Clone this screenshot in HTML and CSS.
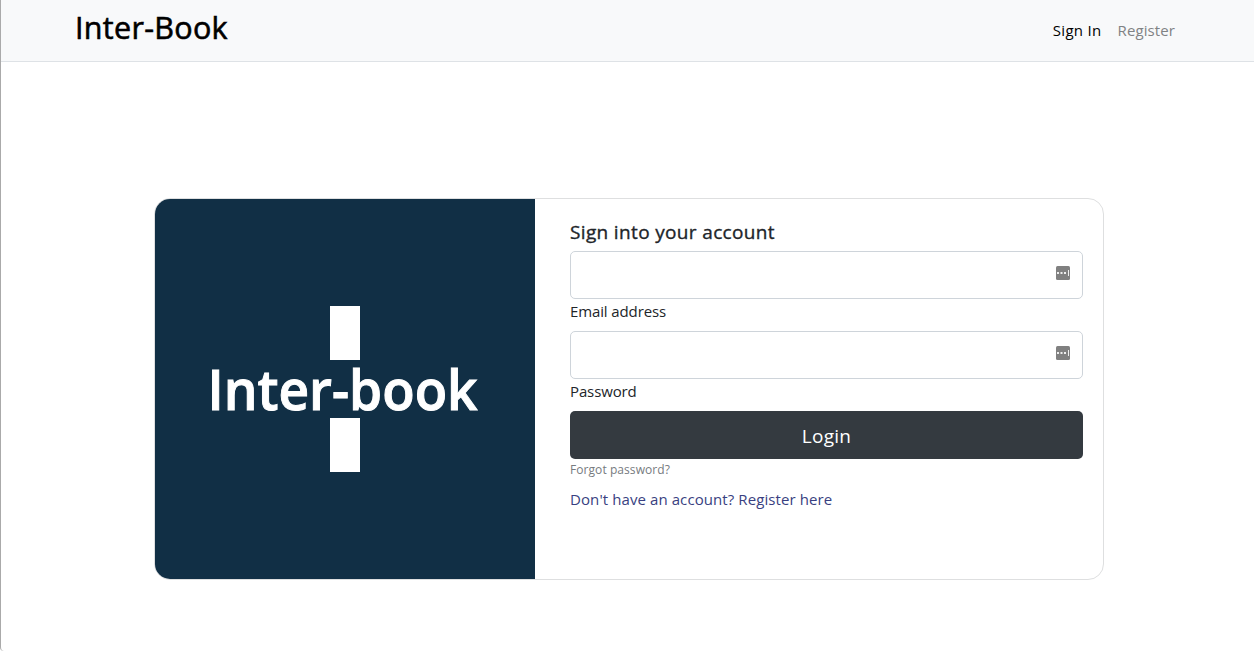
FILE: index.html
```html
<!DOCTYPE html>
<html lang="en">
<head>
<meta charset="utf-8">
<title>Inter-Book</title>
<link rel="stylesheet" href="styles.css">
</head>
<body>
<header class="navbar">
  <a class="brand" href="#"><span>Inter-Book</span></a>
  <nav class="nav-links">
    <a class="nav-link active" href="#">Sign In</a>
    <a class="nav-link" href="#">Register</a>
  </nav>
</header>
<main class="page">
  <section class="card">
    <svg class="logo" viewBox="0 0 380 380" role="img" aria-label="Inter-book">
      <rect width="380" height="380" fill="#112f45"/>
      <rect x="175" y="107" width="30" height="54" fill="#fff"/>
      <rect x="175" y="219" width="30" height="54" fill="#fff"/>
      <text class="logo-text" x="52.500" y="211" textLength="270" lengthAdjust="spacingAndGlyphs">Inter-book</text>
    </svg>
    <form class="form">
      <h1 class="title"><span>Sign into your account</span></h1>
      <div class="field">
        <div class="control"><input class="input" id="email" type="email">
          <svg class="fill-icon" viewBox="0 0 14 14"><rect width="14" height="14" rx="1.500" fill="#808080"/><path d="M1 6h2v2H1zM4.500 6h2v2h-2zM8 6h2v2H8zM12 4h1v6h-1z" fill="#eee"/></svg>
        </div>
        <label class="label" for="email"><span>Email address</span></label>
      </div>
      <div class="field">
        <div class="control"><input class="input" id="password" type="password">
          <svg class="fill-icon" viewBox="0 0 14 14"><rect width="14" height="14" rx="1.500" fill="#808080"/><path d="M1 6h2v2H1zM4.500 6h2v2h-2zM8 6h2v2H8zM12 4h1v6h-1z" fill="#eee"/></svg>
        </div>
        <label class="label" for="password"><span>Password</span></label>
      </div>
      <button class="login" type="button">Login</button>
      <a class="forgot" href="#"><span>Forgot password?</span></a>
      <p class="signup"><span>Don't have an account? <a href="#">Register here</a></span></p>
    </form>
  </section>
</main>
</body>
</html>
```
FILE: styles.css
```css
* { box-sizing: border-box; }
body {
  margin: 0;
  height: 651px;
  overflow: hidden;
  border-left: 1px solid #aaa;
  border-bottom-left-radius: 4px;
  background: #fff;
  color: #212529;
  font: 15px/24px "Open Sans", "Noto Sans", sans-serif;
}
a { color: inherit; text-decoration: none; }
.navbar {
  display: flex;
  justify-content: space-between;
  height: 62px;
  padding: 0 79px 0 74px;
  background: #f8f9fa;
  border-bottom: 1px solid #dee2e6;
}
.brand {
  color: #000;
  font-size: 30.5px;
  line-height: 54px;
  letter-spacing: 0.3px;
  -webkit-text-stroke: 0.6px #000;
}
.nav-links { display: flex; gap: 16px; line-height: 61px; }
.nav-link { color: #808284; letter-spacing: 0.1px; }
.nav-link.active { color: #000; letter-spacing: 0.3px; }
.page { padding: 136px 150px 0 153px; }
.card {
  display: flex;
  width: 950px;
  height: 382px;
  overflow: hidden;
  border: 1px solid #dedfe0;
  border-radius: 16px;
}
.logo { flex: none; width: 380px; height: 380px; }
.logo-text { fill: #fff; stroke: #fff; stroke-width: 1px; font-size: 56px; font-weight: 600; }
.form { flex: 1; padding: 20px 20px 0 35px; }
.title {
  margin: 0 0 8px;
  padding-top: 1px;
  height: 24px;
  font-size: 19px;
  font-weight: 400;
  line-height: 24px;
  letter-spacing: 0.35px;
  -webkit-text-stroke: 0.35px #212529;
}
.field { margin-bottom: 8px; }
.control { position: relative; height: 48px; }
.input {
  display: block;
  width: 100%;
  height: 48px;
  padding: 8px 16px;
  border: 1px solid #ced4da;
  border-radius: 5px;
  background: #fff;
  font: inherit;
}
.fill-icon { position: absolute; top: 15px; right: 13px; width: 14px; height: 14px; }
.label { display: block; height: 24px; letter-spacing: -0.12px; }
.login {
  display: block;
  width: 100%;
  height: 48px;
  padding: 2px 0 0;
  border: 0;
  border-radius: 5px;
  background: #343a40;
  color: #fff;
  font: 19px/46px "Open Sans", "Noto Sans", sans-serif;
  letter-spacing: 0.3px;
}
.forgot { display: block; height: 21px; color: #777b80; font-size: 12px; line-height: 21px; letter-spacing: 0.07px; }
.signup { margin: 7px 0 0; color: #393f81; letter-spacing: 0.09px; }
```
